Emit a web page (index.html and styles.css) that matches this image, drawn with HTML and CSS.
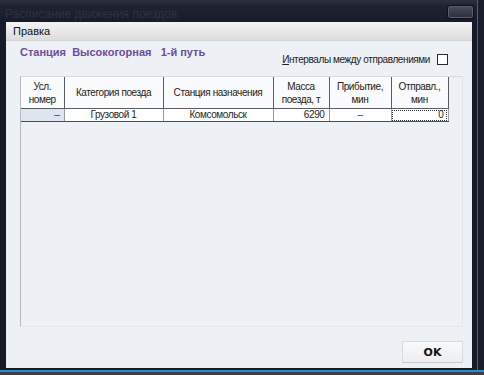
FILE: index.html
```html
<!DOCTYPE html>
<html lang="ru">
<head>
    <meta charset="UTF-8">
    <title>Расписание движения поездов</title>
    <link rel="stylesheet" href="styles.css">
</head>
<body>
    <div class="desktop">
        <div class="window">
            <div class="titlebar">
                <span class="title">Расписание движения поездов</span>
                <span class="close-btn"></span>
            </div>
            <div class="client">
                <div class="menubar"><span class="menu-item">Правка</span></div>
                <div class="content">
                    <div class="top-row">
                        <div class="station">Станция&nbsp; Высокогорная&nbsp;&nbsp; 1-й путь</div>
                        <label class="interval-check">
                            <span><u>И</u>нтервалы между отправлениями</span>
                            <span class="box"></span>
                        </label>
                    </div>

                    <div class="grid">
                        <table class="trains">
                            <colgroup>
                                <col style="width:43px">
                                <col style="width:99px">
                                <col style="width:110px">
                                <col style="width:56px">
                                <col style="width:62px">
                                <col style="width:57px">
                            </colgroup>
                            <thead>
                                <tr>
                                    <th>Усл.<br>номер</th>
                                    <th>Категория поезда</th>
                                    <th>Станция назначения</th>
                                    <th>Масса<br>поезда, т</th>
                                    <th>Прибытие,<br>мин</th>
                                    <th>Отправл.,<br>мин</th>
                                </tr>
                            </thead>
                            <tbody>
                                <tr>
                                    <td class="num">–</td>
                                    <td class="center">Грузовой 1</td>
                                    <td class="center">Комсомольск</td>
                                    <td class="right">6290</td>
                                    <td class="center dash">–</td>
                                    <td class="right focus">0</td>
                                </tr>
                            </tbody>
                        </table>
                    </div>

                    <div class="buttons">
                        <button class="ok">OK</button>
                    </div>
                </div>
            </div>
        </div>
    </div>
</body>
</html>
```

FILE: styles.css
```css
html, body {
    margin: 0;
    padding: 0;
}
body {
    width: 484px;
    height: 375px;
    overflow: hidden;
    background: #1a7fa8;
    font-family: "Liberation Sans", Arial, sans-serif;
    font-size: 11px;
    color: #1e1e1e;
}
.desktop {
    width: 484px;
    height: 375px;
    background: linear-gradient(to bottom, #1a1d2b 0, #1a1d2b 370px, #2a8fc0 370px, #2a8fc0 372px, #3a3f4c 372px);
}
.window {
    width: 478px;
    height: 370px;
    background: #171a28;
    box-sizing: border-box;
    padding: 0 5px 2px 6px;
    display: flex;
    flex-direction: column;
    border-right: 1px solid #2b6f96;
}
.titlebar {
    height: 22px;
    display: flex;
    align-items: flex-start;
    justify-content: space-between;
    background: linear-gradient(to bottom, #2c3040 0, #20232f 6px, #181b29 22px);
    margin: 0 -5px 0 -6px;
    padding: 0 3px 0 5px;
}
.title {
    color: #2e3246;
    font-size: 12px;
    padding-top: 7px;
}
.close-btn {
    width: 25px;
    height: 12px;
    margin-top: 5px;
    border: 1px solid #0d0f18;
    border-radius: 3px;
    background: linear-gradient(to bottom, #4a4e5c, #2a2d3a);
    box-shadow: inset 0 0 0 1px #5b5f6d;
}
.client {
    flex: 1;
    display: flex;
    flex-direction: column;
    background: #edf0f5;
}
.menubar {
    height: 18px;
    display: flex;
    align-items: center;
    padding-left: 7px;
    background: linear-gradient(to bottom, #f4f4f4, #dcdcdc);
    border-bottom: 1px solid #cfd2d8;
}
.menu-item {
    font-size: 11px;
    color: #111;
}
.content {
    flex: 1;
    display: flex;
    flex-direction: column;
    padding: 5px 9px 0 14px;
}
.top-row {
    display: flex;
    justify-content: space-between;
    align-items: flex-start;
    height: 30px;
}
.station {
    color: #6d4c9c;
    font-weight: bold;
    font-size: 11px;
}
.interval-check {
    display: flex;
    align-items: center;
    gap: 7px;
    margin-top: 8px;
    margin-right: 15px;
    font-size: 10px;
    letter-spacing: -0.4px;
    color: #222;
}
.box {
    width: 9px;
    height: 9px;
    border: 1px solid #2a2a2a;
    background: #fff;
}
.grid {
    width: 441px;
    height: 249px;
    border-left: 1px solid #b4b8c0;
    border-top: 1px solid #d6d9df;
    border-right: 1px solid #e2e5ea;
    border-bottom: 1px solid #e2e5ea;
}
.trains {
    border-collapse: collapse;
    table-layout: fixed;
    width: 427px;
    letter-spacing: -0.4px;
}
.trains th {
    height: 31px;
    padding: 0;
    background: #fafbfc;
    font-weight: normal;
    font-size: 10px;
    line-height: 13px;
    text-align: center;
    color: #222;
    border-right: 1px solid #5a5d64;
    border-bottom: 1px solid #5a5d64;
}
.trains td {
    height: 12px;
    padding: 0 4px;
    background: #fff;
    font-size: 10px;
    line-height: 12px;
    border-right: 1px solid #9a9da4;
    border-bottom: 1px solid #4a4d54;
    white-space: nowrap;
}
.trains td.num {
    background: #dfe5ee;
    text-align: right;
    color: #2a3a8a;
}
.center { text-align: center; }
.right { text-align: right; }
.trains td.dash { color: #2a3a8a; }
.trains td.focus {
    outline: 1px dotted #333;
    outline-offset: -2px;
}
.buttons {
    display: flex;
    justify-content: flex-end;
    padding: 14px 0 0 0;
}
.ok {
    width: 61px;
    height: 22px;
    font-family: "DejaVu Sans", sans-serif;
    font-weight: bold;
    font-size: 11px;
    color: #111;
    background: linear-gradient(to bottom, #f8f9fa, #eceef1);
    border: 1px solid #d8dbe0;
    border-bottom-color: #c5c8ce;
    border-radius: 0;
}
```
